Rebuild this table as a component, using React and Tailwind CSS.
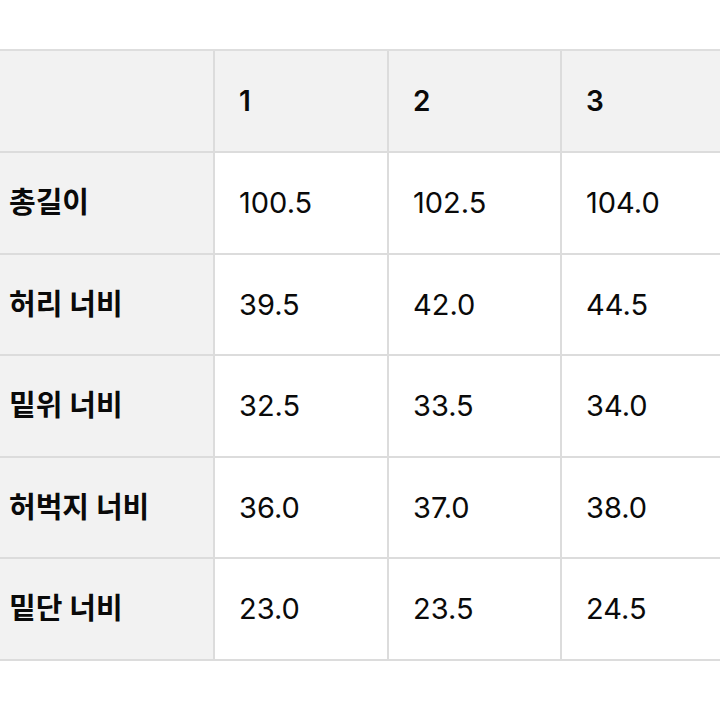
import React from "react";

const rows = [
  ["총길이", "100.5", "102.5", "104.0"],
  ["허리 너비", "39.5", "42.0", "44.5"],
  ["밑위 너비", "32.5", "33.5", "34.0"],
  ["허벅지 너비", "36.0", "37.0", "38.0"],
  ["밑단 너비", "23.0", "23.5", "24.5"],
];

const font = { fontFamily: '"Inter", "Noto Sans CJK KR", sans-serif' };

export default function App() {
  return (
    <div className="w-[720px] h-[720px] bg-white overflow-hidden pt-[49px]" style={font}>
      <div className="grid grid-cols-[215px_174px_173px_1fr] w-[720px] border-t-2 border-[#dedede] text-[#0a0a0a]">
        <div className="h-[102px] bg-[#f2f2f2] border-r-2 border-b-2 border-[#dcdcdc]" />
        {["1", "2", "3"].map((h, i) => (
          <div
            key={h}
            className={`h-[102px] bg-[#f2f2f2] border-b-2 border-[#dcdcdc] flex items-center pl-[24px] text-[28px] font-semibold ${i < 2 ? "border-r-2" : ""}`}
          >
            {h}
          </div>
        ))}
        {rows.map((r) => (
          <React.Fragment key={r[0]}>
            <div className="h-[101.5px] bg-[#f2f2f2] border-r-2 border-b-2 border-[#dcdcdc] flex items-center pl-[9px] text-[29px] font-bold">
              {r[0]}
            </div>
            {r.slice(1).map((v, i) => (
              <div
                key={i}
                className={`h-[101.5px] bg-white border-b-2 border-[#dcdcdc] flex items-center pl-[24px] text-[29px] font-normal ${i < 2 ? "border-r-2" : ""}`}
              >
                {v}
              </div>
            ))}
          </React.Fragment>
        ))}
      </div>
    </div>
  );
}
